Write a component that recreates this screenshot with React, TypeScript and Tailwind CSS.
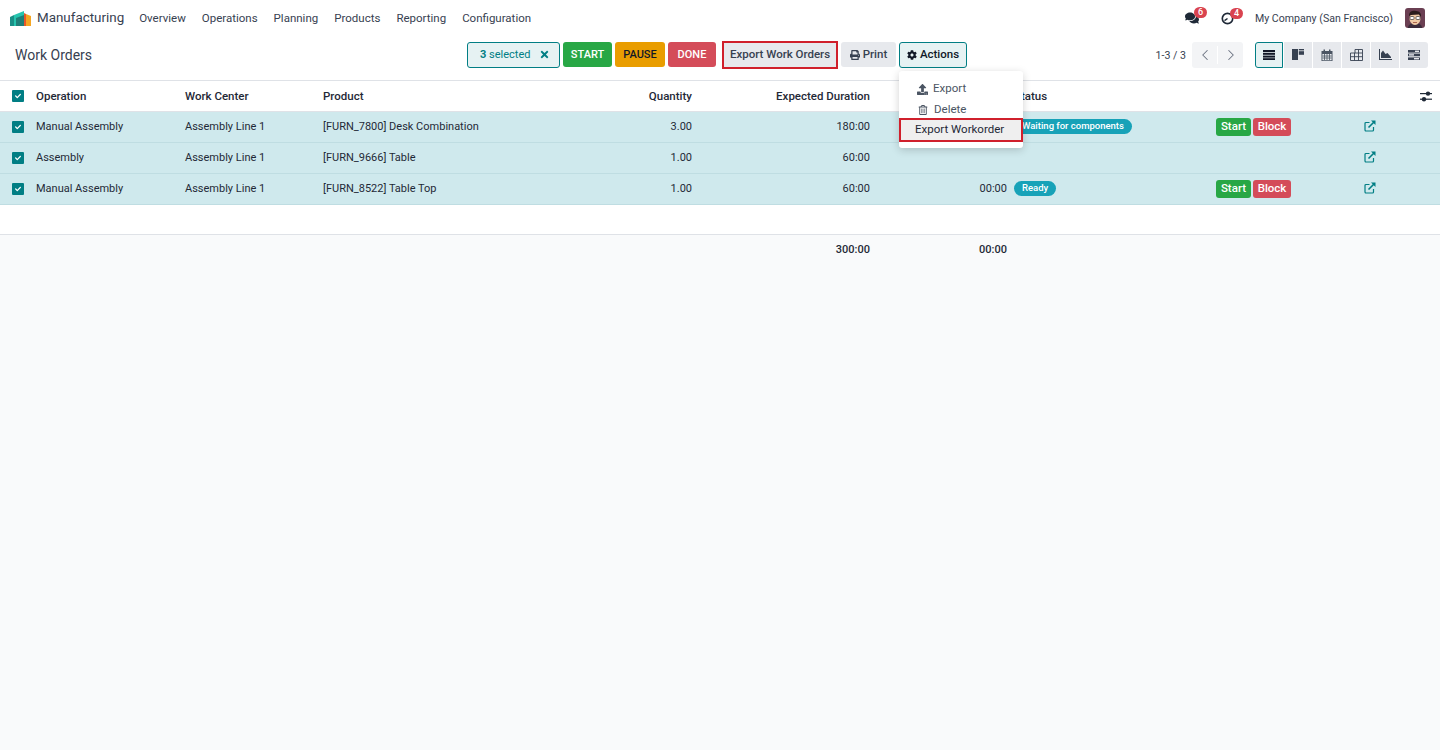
import { ReactNode } from 'react';
import { FaCog, FaPrint, FaRegTrashAlt, FaUpload, FaComments, FaTimes, FaCheck } from 'react-icons/fa';
import { LuChevronLeft, LuChevronRight } from 'react-icons/lu';

const gridCols = 'grid grid-cols-[36px_149px_138px_250px_119px_178px_137px_209px_148px_1fr]';

function Logo() {
  return (
    <svg width="21" height="15" viewBox="0 0 21 15">
      <path d="M0 6 L4 4 V15 H0 Z" fill="#1a8f86" />
      <path d="M4 4 L14 0 V15 H4 Z" fill="#27c4ae" />
      <path d="M6 7 L14 4 V15 H6 Z" fill="#1f7f78" />
      <path d="M14 2 L16 3 V15 H14 Z" fill="#e8572a" />
      <path d="M16 3 L21 5 V15 H16 Z" fill="#f5a623" />
    </svg>
  );
}

function Avatar() {
  return (
    <svg width="20" height="20" viewBox="0 0 20 20" className="rounded-[3px]">
      <rect width="20" height="20" fill="#6a3f52" />
      <path d="M3 20 C3 16 7 15 10 15 C13 15 17 16 17 20 Z" fill="#3a2a3a" />
      <ellipse cx="10" cy="10.5" rx="5.5" ry="6.5" fill="#efc9a4" />
      <path d="M4 8 C4 3 8 2.5 11 3 C15 3 16.5 6 16 9 L14 6.5 L6 7 Z" fill="#2a1d1d" />
      <rect x="5" y="8.5" width="4" height="3" rx="1" fill="#fff" stroke="#333" strokeWidth="0.7" />
      <rect x="11" y="8.5" width="4" height="3" rx="1" fill="#fff" stroke="#333" strokeWidth="0.7" />
      <path d="M8 14.5 H12" stroke="#9c4a3a" strokeWidth="0.8" />
    </svg>
  );
}

function ClockIcon() {
  return (
    <svg width="13" height="13" viewBox="0 0 14 14" fill="none" stroke="#1f2937">
      <circle cx="7" cy="7" r="5.6" strokeWidth="1.8" />
      <path d="M7 7 L3.8 9.2" strokeWidth="1.6" />
    </svg>
  );
}

function ListIcon() {
  return (
    <svg width="12" height="10" viewBox="0 0 12 10" fill="#111827">
      <rect y="0" width="12" height="2" />
      <rect y="2.8" width="12" height="2" />
      <rect y="5.6" width="12" height="2" />
      <rect y="8.2" width="12" height="1.8" />
    </svg>
  );
}

function KanbanIcon() {
  return (
    <svg width="12" height="11" viewBox="0 0 12 11" fill="#374151">
      <rect width="6" height="11" />
      <rect x="6.8" width="5.2" height="1.4" />
      <rect x="6.8" y="2.2" width="5.2" height="3.6" />
    </svg>
  );
}

function CalendarIcon() {
  return (
    <svg width="12" height="12" viewBox="0 0 12 12" fill="#4b5563">
      <path d="M0.5 2 H11.5 V12 H0.5 Z M1.4 5 V11.2 H10.6 V5 Z" fillRule="evenodd" />
      <rect x="2.5" y="0.5" width="1.5" height="2.6" />
      <rect x="8" y="0.5" width="1.5" height="2.6" />
      <path d="M1.4 7 H10.6 M1.4 9 H10.6 M3.5 5 V11 M6 5 V11 M8.5 5 V11" stroke="#4b5563" strokeWidth="0.8" />
    </svg>
  );
}

function TableIcon() {
  return (
    <svg width="13" height="12" viewBox="0 0 13 12" fill="none" stroke="#374151" strokeWidth="0.9">
      <path d="M5 0.5 H12.5 V11.5 H0.5 V4 H12.5 M0.5 7.7 H12.5 M4.5 4 V11.5 M8.5 0.5 V11.5 M5 0.5 V4" />
    </svg>
  );
}

function AreaIcon() {
  return (
    <svg width="13" height="11" viewBox="0 0 13 11" fill="#374151">
      <path d="M0 0 H1 V10 H13 V11 H0 Z" />
      <path d="M2 9 V4 L4 1.5 L6.5 5 L8.5 4 L12 8 V9 Z" />
    </svg>
  );
}

function GanttIcon() {
  return (
    <svg width="12" height="10" viewBox="0 0 12 10" fill="#374151">
      <rect width="12" height="2.6" />
      <rect y="3.6" width="12" height="2.6" />
      <rect y="7.4" width="12" height="2.6" />
      <rect x="7" y="0.6" width="4" height="1.4" fill="#e5e7eb" />
      <rect x="1" y="4.2" width="5" height="1.4" fill="#e5e7eb" />
      <rect x="6" y="8" width="5" height="1.4" fill="#e5e7eb" />
    </svg>
  );
}

function SlidersIcon() {
  return (
    <svg width="12" height="11" viewBox="0 0 12 11" fill="#1f2937">
      <rect y="2" width="12" height="1.2" />
      <rect y="7.6" width="12" height="1.2" />
      <circle cx="8" cy="2.6" r="2.2" />
      <circle cx="4" cy="8.2" r="2.2" />
    </svg>
  );
}

function ExternalIcon() {
  return (
    <svg width="12" height="12" viewBox="0 0 12 12" fill="none" stroke="#017e84">
      <path d="M9.5 7 V10 A1 1 0 0 1 8.5 11 H2 A1 1 0 0 1 1 10 V3.5 A1 1 0 0 1 2 2.5 H5.5" strokeWidth="1.2" />
      <path d="M4.5 7.5 L10 2" strokeWidth="1.6" />
      <path d="M7 0.5 H11.5 V5 Z" fill="#017e84" stroke="none" />
    </svg>
  );
}

function Check() {
  return (
    <span className="flex h-3 w-3 items-center justify-center rounded-[1px] bg-[#017e84]">
      <FaCheck className="text-[6px] text-white" />
    </span>
  );
}

function Badge({ children }: { children: ReactNode }) {
  return (
    <span className="absolute top-[-4px] left-[9px] flex h-[11px] w-[13px] items-center justify-center rounded-full bg-[#d9434f] text-[9px] font-medium leading-none text-white">
      {children}
    </span>
  );
}

function ViewBtn({ children, active }: { children: ReactNode; active?: boolean }) {
  return (
    <div
      className={
        active
          ? 'flex h-[26px] w-[28px] items-center justify-center rounded-l-[3px] border border-[#017e84] bg-[#e6f2f3]'
          : 'flex h-[26px] w-[28px] items-center justify-center bg-[#e7e9ed] last:rounded-r-[3px]'
      }
    >
      {children}
    </div>
  );
}

type Row = {
  op: string;
  product: string;
  qty: string;
  expected: string;
  real?: string;
  status?: string;
  actions: boolean;
};

const rows: Row[] = [
  { op: 'Manual Assembly', product: '[FURN_7800] Desk Combination', qty: '3.00', expected: '180:00', real: '00:00', status: 'Waiting for components', actions: true },
  { op: 'Assembly', product: '[FURN_9666] Table', qty: '1.00', expected: '60:00', actions: false },
  { op: 'Manual Assembly', product: '[FURN_8522] Table Top', qty: '1.00', expected: '60:00', real: '00:00', status: 'Ready', actions: true },
];

export default function App() {
  return (
    <div className="min-h-[750px] bg-[#f9fafb] font-['Roboto',sans-serif] text-[11.5px] text-[#374151]">
      {/* Navbar */}
      <div className="flex h-9 items-center bg-white pr-[15px] pl-[10px]">
        <Logo />
        <span className="ml-[6px] text-[13.4px] text-[#374151]">Manufacturing</span>
        <nav className="ml-[15px] flex gap-[16px] pt-[2px]">
          <span>Overview</span>
          <span>Operations</span>
          <span>Planning</span>
          <span>Products</span>
          <span>Reporting</span>
          <span>Configuration</span>
        </nav>
        <div className="ml-auto flex items-center">
          <span className="relative text-[14px] text-[#1f2937]">
            <FaComments />
            <Badge>6</Badge>
          </span>
          <span className="relative ml-[22px]">
            <ClockIcon />
            <Badge>4</Badge>
          </span>
          <span className="ml-[21px] pt-[2px] text-[10.6px]">My Company (San Francisco)</span>
          <span className="ml-[12px] flex">
            <Avatar />
          </span>
        </div>
      </div>

      {/* Control panel */}
      <div className="flex h-[45px] items-center border-b border-[#dfe2e7] bg-white pr-[12px] pb-[7px] pl-[15px]">
        <span className="w-[452px] pt-[2px] text-[14px] text-[#374151]">Work Orders</span>
        <div className="flex items-center gap-[3px]">
          <div className="flex h-[26px] w-[93px] items-center justify-between rounded-[3px] border border-[#017e84] bg-[#e6f2f3] pr-[9px] pl-[12px] text-[11px] text-[#017e84]">
            <span className="pt-[2px]">
              <b>3</b> selected
            </span>
            <FaTimes className="text-[11px]" />
          </div>
          <button className="h-[25px] w-[49px] rounded-[3px] bg-[#28a745] pt-[2px] text-[11px] font-medium text-white">START</button>
          <button className="h-[25px] w-[50px] rounded-[3px] bg-[#e99d00] pt-[2px] text-[11px] font-medium text-[#111827]">PAUSE</button>
          <button className="h-[25px] w-[48px] rounded-[3px] bg-[#d44c59] pt-[2px] text-[11px] font-medium text-white">DONE</button>
          <button className="ml-[3px] h-[28px] w-[116px] border-2 border-[#d0202c] bg-[#e7e9ed] pt-[1px] font-medium text-[#374151]">Export Work Orders</button>
          <button className="flex h-[25px] w-[55px] items-center justify-center gap-[3px] rounded-[3px] bg-[#e7e9ed] font-medium text-[#374151]">
            <FaPrint className="text-[10px]" /> <span className="pt-[1px]">Print</span>
          </button>
          <div className="relative">
            <button className="flex h-[26px] w-[68px] items-center justify-center gap-[3px] rounded-[3px] border border-[#017e84] bg-[#e6f2f3] font-medium text-[#111827]">
              <FaCog className="text-[10px]" /> <span className="pt-[1px]">Actions</span>
            </button>
            {/* Actions menu */}
            <div className="absolute top-[29px] left-0 z-10 h-[77px] w-[124px] rounded-[3px] bg-white pt-[7px] shadow-[0_2px_8px_rgba(0,0,0,0.18)]">
              <div className="flex h-[21px] items-center gap-[5px] pt-[2px] pl-[18px] text-[#4b5563]">
                <FaUpload className="text-[11px]" /> Export
              </div>
              <div className="flex h-[21px] items-center gap-[6px] pt-[2px] pl-[19px] text-[#4b5563]">
                <FaRegTrashAlt className="text-[10px]" /> Delete
              </div>
              <div className="-mt-[2px] flex h-[24px] items-center border-2 border-[#d0202c] bg-[#efefef] pt-[1px] pl-[14px] text-[#1f2937]">Export Workorder</div>
            </div>
          </div>
        </div>
        <div className="ml-auto flex items-center">
          <span className="mr-[6px] pt-[2px] text-[10.6px]">1-3 / 3</span>
          <div className="mr-[12px] flex h-[26px] items-center rounded-[3px] bg-[#f3f4f6] text-[#6b7280]">
            <span className="flex w-[25px] justify-center">
              <LuChevronLeft size={18} strokeWidth={1.4} />
            </span>
            <span className="flex w-[26px] justify-center border-l border-white">
              <LuChevronRight size={18} strokeWidth={1.4} />
            </span>
          </div>
          <div className="flex gap-[1px]">
            <ViewBtn active>
              <ListIcon />
            </ViewBtn>
            <ViewBtn>
              <KanbanIcon />
            </ViewBtn>
            <ViewBtn>
              <CalendarIcon />
            </ViewBtn>
            <ViewBtn>
              <TableIcon />
            </ViewBtn>
            <ViewBtn>
              <AreaIcon />
            </ViewBtn>
            <ViewBtn>
              <GanttIcon />
            </ViewBtn>
          </div>
        </div>
      </div>

      {/* Table header */}
      <div className={`${gridCols} h-[31px] items-center border-b border-[#dfe2e7] bg-white font-medium text-[#1f2937]`}>
        <span className="pl-[12px]">
          <Check />
        </span>
        <span className="mt-[1px]">Operation</span>
        <span className="mt-[1px]">Work Center</span>
        <span className="mt-[1px]">Product</span>
        <span className="mt-[1px] text-right">Quantity</span>
        <span className="mt-[1px] text-right">Expected Duration</span>
        <span />
        <span className="mt-[1px] pl-[7px]">Status</span>
        <span />
        <span className="flex justify-end pr-[8px]">
          <SlidersIcon />
        </span>
      </div>

      {/* Rows */}
      {rows.map((row, i) => (
        <div key={i} className={`${gridCols} h-[31px] items-center border-b border-[#bfdde2] bg-[#cfe9ed] text-[11px] text-[#1f2937]`}>
          <span className="pl-[12px]">
            <Check />
          </span>
          <span>{row.op}</span>
          <span>Assembly Line 1</span>
          <span>{row.product}</span>
          <span className="text-right">{row.qty}</span>
          <span className="text-right">{row.expected}</span>
          <span className="text-right">{row.real}</span>
          <span className="mb-[2px] flex pl-[7px]">
            {row.status && (
              <span className="flex h-[15px] items-center rounded-full bg-[#17a2b8] px-[8px] text-[9.5px] font-medium text-white">{row.status}</span>
            )}
          </span>
          <span className="flex gap-[2px] text-[11.5px]">
            {row.actions && (
              <>
                <button className="h-[18px] w-[35px] rounded-[3px] bg-[#28a745] font-medium text-white">Start</button>
                <button className="h-[18px] w-[38px] rounded-[3px] bg-[#d44c59] font-medium text-white">Block</button>
              </>
            )}
          </span>
          <span className="mb-[2px]">
            <ExternalIcon />
          </span>
        </div>
      ))}

      {/* Empty filler */}
      <div className="h-[30px] border-b border-[#dfe2e7] bg-white" />

      {/* Footer totals */}
      <div className={`${gridCols} h-[29px] items-center text-[11px] font-medium text-[#1f2937]`}>
        <span />
        <span />
        <span />
        <span />
        <span />
        <span className="mt-[1px] text-right">300:00</span>
        <span className="mt-[1px] text-right">00:00</span>
      </div>
    </div>
  );
}
